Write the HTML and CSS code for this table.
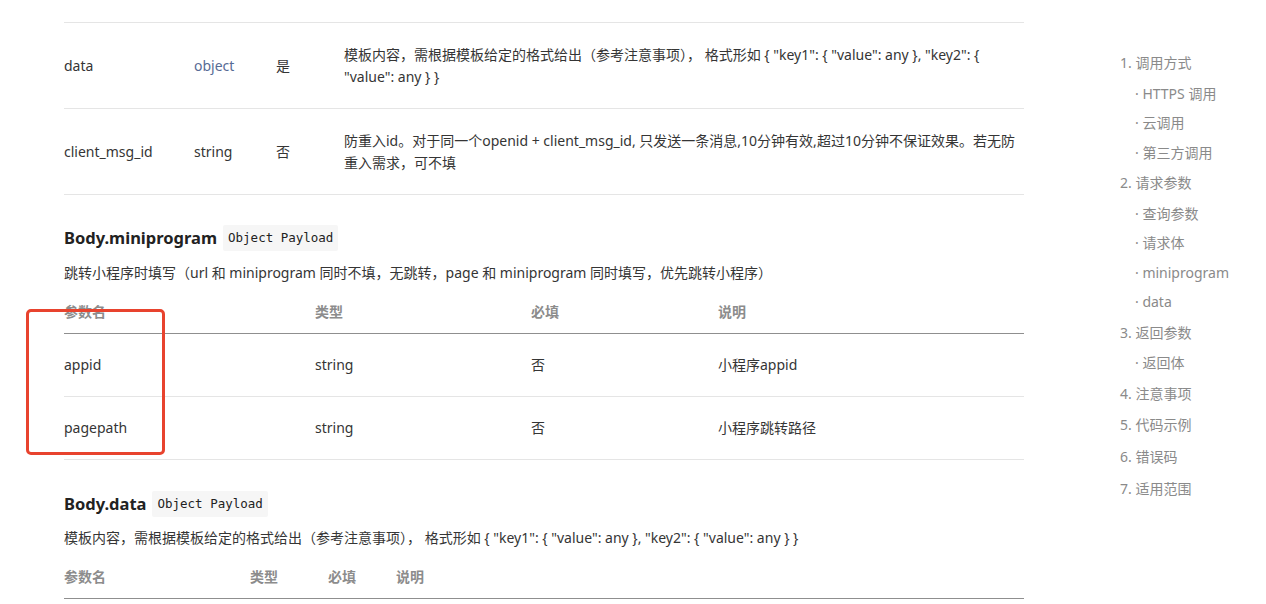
FILE: index.html
```html
<!DOCTYPE html>
<html lang="zh">
<head>
<meta charset="utf-8">
<title>Body.miniprogram</title>
<link rel="stylesheet" href="styles.css">
</head>
<body>
<div class="page">
  <main class="content">
    <table class="params params-top">
      <colgroup>
        <col class="c1"><col class="c2"><col class="c3"><col>
      </colgroup>
      <tbody>
        <tr>
          <td>data</td>
          <td class="type-link">object</td>
          <td>是</td>
          <td>模板内容，需根据模板给定的格式给出（参考注意事项）， 格式形如 { "key1": { "value": any }, "key2": { "value": any } }</td>
        </tr>
        <tr>
          <td>client_msg_id</td>
          <td>string</td>
          <td>否</td>
          <td>防重入id。对于同一个openid + client_msg_id, 只发送一条消息,10分钟有效,超过10分钟不保证效果。若无防重入需求，可不填</td>
        </tr>
      </tbody>
    </table>

    <section class="block">
      <h4 class="block-title">Body.miniprogram <code class="tag">Object Payload</code></h4>
      <p class="block-desc">跳转小程序时填写（url 和 miniprogram 同时不填，无跳转，page 和 miniprogram 同时填写，优先跳转小程序）</p>
      <div class="table-wrap">
        <table class="params params-mini">
          <thead>
            <tr><th>参数名</th><th>类型</th><th>必填</th><th>说明</th></tr>
          </thead>
          <tbody>
            <tr><td>appid</td><td>string</td><td>否</td><td>小程序appid</td></tr>
            <tr><td>pagepath</td><td>string</td><td>否</td><td>小程序跳转路径</td></tr>
          </tbody>
        </table>
        <div class="highlight"></div>
      </div>
    </section>

    <section class="block">
      <h4 class="block-title">Body.data <code class="tag">Object Payload</code></h4>
      <p class="block-desc">模板内容，需根据模板给定的格式给出（参考注意事项）， 格式形如 { "key1": { "value": any }, "key2": { "value": any } }</p>
      <table class="params params-data">
        <thead>
          <tr><th>参数名</th><th>类型</th><th>必填</th><th>说明</th></tr>
        </thead>
      </table>
    </section>
  </main>

  <nav class="toc">
    <ul>
      <li class="l1">1. 调用方式</li>
      <li class="l2">· HTTPS 调用</li>
      <li class="l2">· 云调用</li>
      <li class="l2">· 第三方调用</li>
      <li class="l1">2. 请求参数</li>
      <li class="l2">· 查询参数</li>
      <li class="l2">· 请求体</li>
      <li class="l2">· miniprogram</li>
      <li class="l2">· data</li>
      <li class="l1">3. 返回参数</li>
      <li class="l2">· 返回体</li>
      <li class="l1">4. 注意事项</li>
      <li class="l1">5. 代码示例</li>
      <li class="l1">6. 错误码</li>
      <li class="l1">7. 适用范围</li>
    </ul>
  </nav>
</div>
</body>
</html>
```

FILE: styles.css
```css
* { box-sizing: border-box; }
html, body { margin: 0; padding: 0; background: #fff; }
body {
  font-family: "Noto Sans", "Noto Sans CJK SC", sans-serif;
  font-size: 14px;
  color: #353535;
  overflow: hidden;
}
.page {
  display: flex;
  align-items: flex-start;
  padding-left: 64px;
  gap: 96px;
}
.content { width: 960px; flex: none; }

.params { width: 100%; border-collapse: collapse; }
.params td, .params th { text-align: left; vertical-align: middle; padding: 0; }

.params-top { margin-top: 22px; border-top: 1px solid #e5e5e5; }
.params-top col.c1 { width: 130px; }
.params-top col.c2 { width: 82px; }
.params-top col.c3 { width: 68px; }
.params-top td { padding: 20.5px 0; line-height: 22px; border-bottom: 1px solid #e5e5e5; }
.type-link { color: #576b95; }

.block { margin-top: 30px; }
.block + .block { margin-top: 31px; }
.block-title {
  margin: 0;
  font-size: 16.5px;
  font-weight: 700;
  color: #222;
  line-height: 26px;
  display: flex;
  align-items: center;
  gap: 6px;
}
.tag {
  font-family: "DejaVu Sans Mono", "Liberation Mono", monospace;
  font-size: 12.5px;
  font-weight: 400;
  background: #f6f6f6;
  color: #222;
  padding: 4px 5px;
  line-height: 18px;
  border-radius: 2px;
}
.block-desc { margin: 11px 0 0; line-height: 22px; font-size: 14px; }
.block + .block .block-desc { margin-top: 10px; }

.table-wrap { position: relative; }
.params thead th {
  font-weight: 700;
  color: #8c8c8c;
  border-bottom: 1px solid #8f8f8f;
  line-height: 20px;
  padding: 18px 0 11px;
}
.params-mini th:nth-child(1) { width: 251px; }
.params-mini th:nth-child(2) { width: 216px; }
.params-mini th:nth-child(3) { width: 187px; }
.params-mini td { height: 63px; border-bottom: 1px solid #e5e5e5; line-height: 22px; }

.params-data th:nth-child(1) { width: 186px; }
.params-data th:nth-child(2) { width: 78px; }
.params-data th:nth-child(3) { width: 68px; }

.highlight {
  position: absolute;
  left: -38px;
  top: 25px;
  width: 139px;
  height: 146px;
  border: 3px solid #e8432e;
  border-radius: 5px;
  pointer-events: none;
}

.toc { padding-top: 47px; flex: none; }
.toc ul { list-style: none; margin: 0; padding: 0; }
.toc li { color: #8a8a8a; font-size: 14px; white-space: nowrap; }
.toc li.l1 { line-height: 31.6px; }
.toc li.l2 { line-height: 29.5px; padding-left: 15px; }
```
